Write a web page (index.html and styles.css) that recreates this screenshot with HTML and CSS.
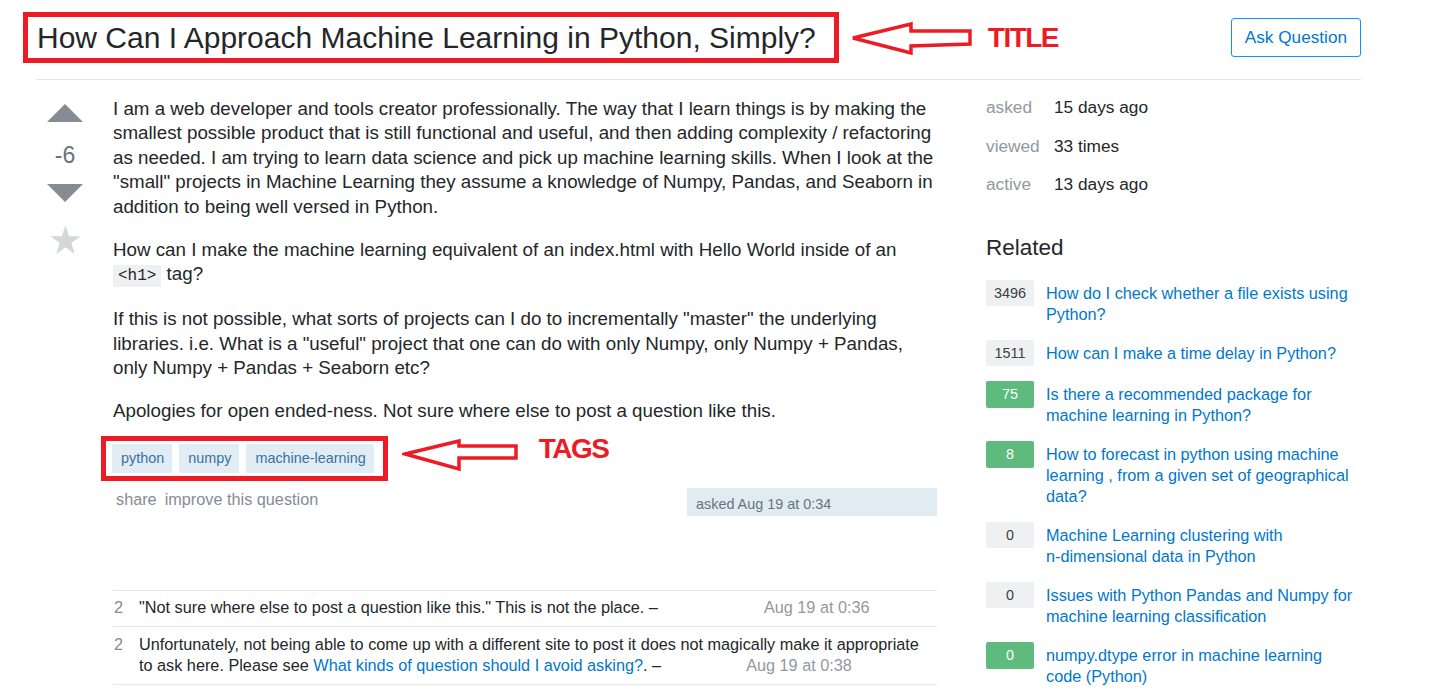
FILE: index.html
```html
<!DOCTYPE html>
<html lang="en">
<head>
<meta charset="utf-8">
<title>How Can I Approach Machine Learning in Python, Simply?</title>
<link rel="stylesheet" href="styles.css">
</head>
<body>
<div class="page">
  <div class="header">
    <h1 class="title">How Can I Approach Machine Learning in Python, Simply?</h1>
    <svg class="note-arrow title-arrow" width="124" height="34" viewBox="0 0 124 34">
      <polygon points="3,17 61,3 61,10 120,10 120,23 61,25 61,32" />
    </svg>
    <span class="note-label title-label">TITLE</span>
    <a class="ask-btn" href="#">Ask Question</a>
  </div>
  <div class="rule"></div>
  <div class="content">
    <div class="mainbar">
      <div class="votecell">
        <svg class="vote-up" width="36" height="18" viewBox="0 0 36 18"><polygon points="0,18 36,18 18,0"/></svg>
        <div class="vote-count">-6</div>
        <svg class="vote-down" width="36" height="18" viewBox="0 0 36 18"><polygon points="0,0 36,0 18,18"/></svg>
        <svg class="star" width="31" height="30" viewBox="0 0 100 95"><polygon points="50,0 61.8,35.1 98.9,35.1 68.8,57.3 79.4,92.7 50,71 20.6,92.7 31.2,57.3 1.1,35.1 38.2,35.1"/></svg>
      </div>
      <div class="postcell">
        <div class="post-text">
          <p>I am a web developer and tools creator professionally. The way that I learn things is by making the smallest possible product that is still functional and useful, and then adding complexity / refactoring as needed. I am trying to learn data science and pick up machine learning skills. When I look at the "small" projects in Machine Learning they assume a knowledge of Numpy, Pandas, and Seaborn in addition to being well versed in Python.</p>
          <p>How can I make the machine learning equivalent of an index.html with Hello World inside of an <code>&lt;h1&gt;</code> tag?</p>
          <p>If this is not possible, what sorts of projects can I do to incrementally "master" the underlying libraries. i.e. What is a "useful" project that one can do with only Numpy, only Numpy + Pandas, only Numpy + Pandas + Seaborn etc?</p>
          <p class="last">Apologies for open ended-ness. Not sure where else to post a question like this.</p>
        </div>
        <div class="tagrow">
          <div class="tagbox">
            <a class="tag" href="#">python</a>
            <a class="tag" href="#">numpy</a>
            <a class="tag" href="#">machine-learning</a>
          </div>
          <svg class="note-arrow tags-arrow" width="118" height="34" viewBox="0 0 118 34">
            <polygon points="3,16 57,3 57,8 114,8 114,20 57,20 57,31" />
          </svg>
          <span class="note-label tags-label">TAGS</span>
        </div>
        <div class="post-footer">
          <div class="post-menu">
            <a href="#">share</a>
            <a href="#">improve this question</a>
          </div>
          <div class="signature">asked Aug 19 at 0:34</div>
        </div>
        <div class="comments">
          <div class="comment">
            <span class="comment-score">2</span>
            <div class="comment-body">"Not sure where else to post a question like this." This is not the place. –<span class="comment-date gap-a">Aug 19 at 0:36</span></div>
          </div>
          <div class="comment">
            <span class="comment-score">2</span>
            <div class="comment-body">Unfortunately, not being able to come up with a different site to post it does not magically make it appropriate to ask here. Please see <a href="#">What kinds of question should I avoid asking?</a>. –<span class="comment-date gap-b">Aug 19 at 0:38</span></div>
          </div>
        </div>
      </div>
    </div>
    <div class="sidebar">
      <div class="stat"><span class="stat-label">asked</span><span class="stat-value">15 days ago</span></div>
      <div class="stat"><span class="stat-label">viewed</span><span class="stat-value">33 times</span></div>
      <div class="stat"><span class="stat-label">active</span><span class="stat-value">13 days ago</span></div>
      <h4 class="related-title">Related</h4>
      <div class="related">
        <div class="rel-item"><span class="badge">3496</span><a href="#">How do I check whether a file exists using Python?</a></div>
        <div class="rel-item"><span class="badge">1511</span><a href="#">How can I make a time delay in Python?</a></div>
        <div class="rel-item"><span class="badge accepted">75</span><a href="#">Is there a recommended package for machine learning in Python?</a></div>
        <div class="rel-item"><span class="badge accepted">8</span><a href="#">How to forecast in python using machine learning , from a given set of geographical data?</a></div>
        <div class="rel-item"><span class="badge">0</span><a href="#">Machine Learning clustering with <span class="nowrap">n-dimensional</span> data in Python</a></div>
        <div class="rel-item"><span class="badge">0</span><a href="#">Issues with Python Pandas and Numpy for machine learning classification</a></div>
        <div class="rel-item"><span class="badge accepted">0</span><a href="#">numpy.dtype error in machine learning code (Python)</a></div>
      </div>
    </div>
  </div>
</div>
</body>
</html>
```

FILE: styles.css
```css
* { box-sizing: border-box; }
html, body { margin: 0; padding: 0; background: #fff; }
body {
  font-family: "Liberation Sans", Arial, sans-serif;
  color: #242729;
}
a { text-decoration: none; }
.nowrap { white-space: nowrap; }

.page {
  width: 1361px;
  padding: 12px 0 0 36px;
}

/* header */
.header {
  display: flex;
  align-items: center;
  margin-left: -13px;
}
.title {
  margin: 0;
  font-size: 30px;
  font-weight: normal;
  line-height: 41px;
  color: #242729;
  border: 5px solid #ed1c24;
  padding: 0 18px 0 9px;
}
.note-arrow polygon {
  fill: none;
  stroke: #ed1c24;
  stroke-width: 3.5;
  stroke-linejoin: miter;
}
.title-arrow { margin-left: 11px; }
.note-label {
  font-family: "Liberation Sans", Arial, sans-serif;
  font-weight: bold;
  font-size: 28px;
  line-height: 28px;
  letter-spacing: -1.5px;
  color: #ed1c24;
}
.title-label { margin-left: 14px; }
.ask-btn {
  margin-left: auto;
  height: 39px;
  padding: 0 13px;
  display: flex;
  align-items: center;
  border: 1px solid #0a95ff;
  border-radius: 3px;
  color: #0077cc;
  font-size: 17.2px;
}

.rule {
  margin-top: 16px;
  border-top: 1px solid #e4e6e8;
}

.content {
  display: flex;
  padding-top: 17px;
}

/* main */
.mainbar {
  display: flex;
  width: 901px;
}
.votecell {
  width: 58px;
  display: flex;
  flex-direction: column;
  align-items: center;
}
.vote-up { margin-top: 7px; fill: #858c93; }
.vote-count {
  margin-top: 18px;
  font-size: 23px;
  line-height: 30px;
  color: #6a737c;
}
.vote-down { margin-top: 14px; fill: #858c93; }
.star { margin-top: 23px; fill: #d4d7da; }

.postcell {
  width: 824px;
  margin-left: 19px;
}
.post-text p {
  margin: 0 0 18.75px;
  font-size: 18.75px;
  line-height: 24.4px;
}
.post-text p.last { margin-bottom: 12px; }
.post-text code {
  font-family: "Liberation Mono", "DejaVu Sans Mono", monospace;
  font-size: 16px;
  background: #eff0f1;
  padding: 2px 5px;
}

.tagrow {
  display: flex;
  align-items: flex-start;
}
.tagbox {
  display: flex;
  gap: 7px;
  margin-left: -12px;
  border: 5px solid #ed1c24;
  padding: 3px 9px 3px 6px;
}
.tag {
  display: block;
  background: #e1ecf4;
  color: #39739d;
  font-size: 14.4px;
  line-height: 17px;
  padding: 6px 8px 6px 9px;
}
.tags-arrow { margin-left: 14px; margin-top: 2px; }
.tags-label { margin-left: 19px; margin-top: -1px; }

.post-footer {
  display: flex;
  justify-content: space-between;
  align-items: flex-start;
  margin-top: 7px;
}
.post-menu {
  padding: 1px 0 0 3px;
  font-size: 16.25px;
  line-height: 20px;
  display: flex;
  gap: 8px;
}
.post-menu a { color: #848d95; }
.signature {
  width: 250px;
  background: #e1ebf2;
  padding: 8px 9px 3px;
  font-size: 14.4px;
  line-height: 17px;
  color: #6a737c;
}

.comments {
  margin-top: 74px;
  border-top: 1px solid #e4e6e8;
}
.comment {
  display: flex;
  border-bottom: 1px solid #e4e6e8;
  padding: 6px 0 8px;
  font-size: 16.25px;
  line-height: 21px;
}
.comment + .comment { padding-top: 7px; }
.comment-score {
  width: 26px;
  flex: none;
  padding-left: 1px;
  color: #848d95;
}
.comment-body { flex: 1; padding-right: 14px; }
.comment-body a { color: #0077cc; }
.comment-date { color: #9199a1; }
.gap-a { margin-left: 106px; }
.gap-b { margin-left: 85px; }

/* sidebar */
.sidebar {
  margin-left: 49px;
  width: 375px;
}
.stat {
  display: flex;
  font-size: 17.25px;
  line-height: 21px;
  margin-bottom: 17.5px;
}
.stat-label {
  width: 68px;
  color: #9199a1;
}
.stat-value { color: #242729; }
.related-title {
  margin: 38px 0 17.5px;
  font-size: 22.5px;
  line-height: 29px;
  font-weight: normal;
  color: #242729;
}
.rel-item {
  display: flex;
  align-items: flex-start;
  margin-bottom: 15px;
}
.badge {
  flex: none;
  width: 48px;
  height: 26px;
  border-radius: 2px;
  background: #eff0f1;
  color: #3b4045;
  font-size: 14.4px;
  display: flex;
  align-items: center;
  justify-content: center;
}
.badge.accepted {
  background: #5eba7d;
  color: #fff;
  height: 27px;
}
.rel-item a {
  margin-left: 12px;
  width: 310px;
  padding-top: 3px;
  font-size: 16.25px;
  line-height: 21px;
  color: #0077cc;
}
```
